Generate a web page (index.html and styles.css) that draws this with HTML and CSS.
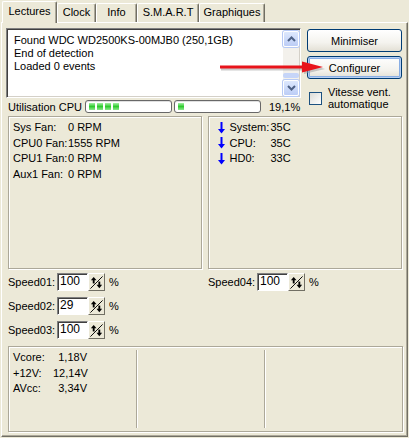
FILE: index.html
```html
<!DOCTYPE html>
<html lang="fr">
<head>
    <meta charset="UTF-8">
    <title>SpeedFan</title>
    <link rel="stylesheet" href="styles.css">
</head>
<body>

<div class="sf-window">
    <!-- Tabs -->
    <div class="sf-tabs">
        <div class="sf-tab sf-tab-active" style="width:55px">Lectures</div>
        <div class="sf-tab" style="width:39px">Clock</div>
        <div class="sf-tab" style="width:41px">Info</div>
        <div class="sf-tab" style="width:62px">S.M.A.R.T</div>
        <div class="sf-tab" style="width:66px">Graphiques</div>
    </div>

    <div class="sf-panel">
        <!-- Top: log + buttons -->
        <div class="sf-top">
            <div class="sf-left">
                <div class="sf-log">
                    <div class="sf-log-text">
                        <div>Found WDC WD2500KS-00MJB0 (250,1GB)</div>
                        <div>End of detection</div>
                        <div>Loaded 0 events</div>
                    </div>
                    <div class="sf-scroll">
                        <div class="sf-scroll-btn">
                            <svg width="9" height="6" viewBox="0 0 9 6"><path d="M1 5 L4.5 1.5 L8 5" fill="none" stroke="#4d6185" stroke-width="2"/></svg>
                        </div>
                        <div class="sf-scroll-track"><div class="sf-scroll-thumb"></div></div>
                        <div class="sf-scroll-btn">
                            <svg width="9" height="6" viewBox="0 0 9 6"><path d="M1 1 L4.5 4.5 L8 1" fill="none" stroke="#4d6185" stroke-width="2"/></svg>
                        </div>
                    </div>
                </div>

                <!-- CPU usage -->
                <div class="sf-cpu">
                    <span class="sf-cpu-label">Utilisation CPU</span>
                    <div class="sf-bar">
                        <i></i><i></i><i></i><i></i>
                    </div>
                    <div class="sf-bar sf-bar-2">
                        <i></i>
                    </div>
                    <span class="sf-cpu-value">19,1%</span>
                </div>
            </div>

            <div class="sf-right">
                <button class="sf-btn">Minimiser</button>
                <button class="sf-btn sf-btn-focus">Configurer</button>
                <label class="sf-check">
                    <span class="sf-checkbox"></span>
                    <span>Vitesse vent.<br>automatique</span>
                </label>
            </div>
        </div>

        <!-- Fans + temperatures -->
        <div class="sf-boxes">
            <div class="sf-box sf-fans">
                <span>Sys Fan:</span><span>0 RPM</span>
                <span>CPU0 Fan:</span><span>1555 RPM</span>
                <span>CPU1 Fan:</span><span>0 RPM</span>
                <span>Aux1 Fan:</span><span>0 RPM</span>
            </div>
            <div class="sf-box sf-temps">
                <span class="sf-arrow"><svg width="7" height="12" viewBox="0 0 7 12"><path d="M3.5 0 V10" stroke="#0000ff" stroke-width="2"/><path d="M0 7 L3.5 11.5 L7 7 Z" fill="#0000ff"/></svg></span><span>System:</span><span>35C</span>
                <span class="sf-arrow"><svg width="7" height="12" viewBox="0 0 7 12"><path d="M3.5 0 V10" stroke="#0000ff" stroke-width="2"/><path d="M0 7 L3.5 11.5 L7 7 Z" fill="#0000ff"/></svg></span><span>CPU:</span><span>35C</span>
                <span class="sf-arrow"><svg width="7" height="12" viewBox="0 0 7 12"><path d="M3.5 0 V10" stroke="#0000ff" stroke-width="2"/><path d="M0 7 L3.5 11.5 L7 7 Z" fill="#0000ff"/></svg></span><span>HD0:</span><span>33C</span>
            </div>
        </div>

        <!-- Fan speeds -->
        <div class="sf-speeds">
            <div class="sf-speed-col">
                <div class="sf-speed">
                    <span class="sf-speed-label">Speed01:</span>
                    <span class="sf-input">100</span>
                    <span class="sf-spin"><svg width="15" height="15" viewBox="0 0 16 16"><path d="M1.5 14.5 L14.5 1.5" stroke="#000" stroke-width="1"/><path d="M5 4 V9" stroke="#000" stroke-width="2"/><path d="M2 5.5 L5 2 L8 5.5 Z" fill="#000"/><path d="M11 7 V12" stroke="#000" stroke-width="2"/><path d="M8 10.5 L11 14 L14 10.5 Z" fill="#000"/></svg></span>
                    <span>%</span>
                </div>
                <div class="sf-speed">
                    <span class="sf-speed-label">Speed02:</span>
                    <span class="sf-input">29</span>
                    <span class="sf-spin"><svg width="15" height="15" viewBox="0 0 16 16"><path d="M1.5 14.5 L14.5 1.5" stroke="#000" stroke-width="1"/><path d="M5 4 V9" stroke="#000" stroke-width="2"/><path d="M2 5.5 L5 2 L8 5.5 Z" fill="#000"/><path d="M11 7 V12" stroke="#000" stroke-width="2"/><path d="M8 10.5 L11 14 L14 10.5 Z" fill="#000"/></svg></span>
                    <span>%</span>
                </div>
                <div class="sf-speed">
                    <span class="sf-speed-label">Speed03:</span>
                    <span class="sf-input">100</span>
                    <span class="sf-spin"><svg width="15" height="15" viewBox="0 0 16 16"><path d="M1.5 14.5 L14.5 1.5" stroke="#000" stroke-width="1"/><path d="M5 4 V9" stroke="#000" stroke-width="2"/><path d="M2 5.5 L5 2 L8 5.5 Z" fill="#000"/><path d="M11 7 V12" stroke="#000" stroke-width="2"/><path d="M8 10.5 L11 14 L14 10.5 Z" fill="#000"/></svg></span>
                    <span>%</span>
                </div>
            </div>
            <div class="sf-speed-col">
                <div class="sf-speed">
                    <span class="sf-speed-label">Speed04:</span>
                    <span class="sf-input">100</span>
                    <span class="sf-spin"><svg width="15" height="15" viewBox="0 0 16 16"><path d="M1.5 14.5 L14.5 1.5" stroke="#000" stroke-width="1"/><path d="M5 4 V9" stroke="#000" stroke-width="2"/><path d="M2 5.5 L5 2 L8 5.5 Z" fill="#000"/><path d="M11 7 V12" stroke="#000" stroke-width="2"/><path d="M8 10.5 L11 14 L14 10.5 Z" fill="#000"/></svg></span>
                    <span>%</span>
                </div>
            </div>
        </div>

        <!-- Voltages -->
        <div class="sf-box sf-volts">
            <div class="sf-volt-col">
                <span>Vcore:</span><span class="sf-v">1,18V</span>
                <span>+12V:</span><span class="sf-v">12,14V</span>
                <span>AVcc:</span><span class="sf-v">3,34V</span>
            </div>
            <div class="sf-volt-col sf-volt-sep"></div>
            <div class="sf-volt-col sf-volt-sep sf-volt-last"></div>
        </div>
    </div>

    <!-- Red annotation arrow -->
    <svg class="sf-annot" width="110" height="16" viewBox="0 0 110 16">
        <path d="M1 9 H86" stroke="#9a9a9a" stroke-width="3" opacity="0.5"/>
        <path d="M84 3 L105 9 L84 14 Z" fill="#9a9a9a" opacity="0.5"/>
        <path d="M0 7 H84" stroke="#e8141b" stroke-width="3"/>
        <path d="M82 1.5 L103 7 L82 12.5 Z" fill="#e8141b"/>
    </svg>
</div>

</body>
</html>
```

FILE: styles.css
```css
/* Reset */
* {
    margin: 0;
    padding: 0;
    box-sizing: border-box;
}

body {
    background-color: #ece9d8;
    font-family: 'Liberation Sans', Arial, sans-serif;
    font-size: 11px;
    color: #000;
    white-space: nowrap;
}

.sf-window {
    position: relative;
    width: 409px;
    height: 438px;
    background-color: #ece9d8;
}

/* Tabs */
.sf-tabs {
    display: flex;
    align-items: flex-end;
    height: 22px;
    padding-left: 2px;
}

.sf-tab {
    height: 19px;
    line-height: 17px;
    text-align: center;
    border-top: 1px solid #fff;
    border-left: 1px solid #fff;
    border-right: 1px solid #716f64;
    border-top-left-radius: 2px;
    border-top-right-radius: 2px;
    box-shadow: inset -1px 0 0 #aca899;
    overflow: hidden;
}

.sf-tab-active {
    height: 22px;
    line-height: 19px;
    margin-bottom: -1px;
    background-color: #ece9d8;
    position: relative;
    z-index: 2;
}

/* Main panel */
.sf-panel {
    margin: 0 1px 0 1px;
    height: 415px;
    border-top: 1px solid #fff;
    border-left: 1px solid #fff;
    border-right: 1px solid #716f64;
    border-bottom: 1px solid #716f64;
    box-shadow: inset -1px -1px 0 #aca899;
    padding: 5px 5px 0 5px;
}

.sf-top {
    display: flex;
    gap: 6px;
}

.sf-left {
    width: 296px;
    margin-left: -1px;
}

/* Log box */
.sf-log {
    display: flex;
    height: 70px;
    background-color: #fff;
    border-top: 1px solid #808080;
    border-left: 1px solid #808080;
    border-right: 1px solid #fff;
    border-bottom: 1px solid #fff;
    box-shadow: inset 1px 1px 0 #404040, inset -1px -1px 0 #d4d0c8;
    padding: 2px 1px 1px 2px;
}

.sf-log-text {
    flex: 1;
    padding: 3px 0 0 5px;
    line-height: 13px;
}

.sf-scroll {
    width: 16px;
    display: flex;
    flex-direction: column;
    background-color: #f3f1ec;
}

.sf-scroll-btn {
    height: 16px;
    display: flex;
    align-items: center;
    justify-content: center;
    background: linear-gradient(#dde8fd, #bccdf6);
    border: 1px solid #fff;
    border-radius: 2px;
    box-shadow: 0 0 0 1px #b7caf5;
}

.sf-scroll-track {
    flex: 1;
    display: flex;
    align-items: flex-end;
    padding-bottom: 2px;
}

.sf-scroll-thumb {
    width: 100%;
    height: 5px;
    background-color: #c6d5f8;
    border-radius: 2px;
}

/* CPU usage row */
.sf-cpu {
    display: flex;
    align-items: center;
    height: 15px;
    margin-top: 1px;
    padding-left: 2px;
}

.sf-cpu-label {
    width: 77px;
}

.sf-bar {
    width: 87px;
    height: 13px;
    border: 1px solid #686868;
    border-radius: 3px;
    background-color: #fff;
    box-shadow: inset 0 1px 0 #e0e0e0;
    display: flex;
    align-items: center;
    gap: 2px;
    padding-left: 3px;
}

.sf-bar-2 {
    margin-left: 2px;
}

.sf-bar i {
    width: 6px;
    height: 7px;
    background: linear-gradient(#a6f0a6, #2fcb2f 50%, #8ee88e);
}

.sf-cpu-value {
    margin-left: 8px;
}

/* Right column */
.sf-right {
    width: 95px;
    display: flex;
    flex-direction: column;
    padding-top: 1px;
}

.sf-btn {
    height: 23px;
    width: 95px;
    font-family: inherit;
    font-size: 11px;
    color: #000;
    border: 1px solid #003c74;
    border-radius: 3px;
    background: linear-gradient(#ffffff, #f4f3ee 60%, #e3e0d5);
    margin-bottom: 4px;
}

.sf-btn-focus {
    box-shadow: inset 0 0 0 1px #b6cff3, inset 0 0 0 2px #89aee4;
}

.sf-check {
    display: flex;
    gap: 6px;
    padding-left: 2px;
    margin-top: 3px;
    line-height: 12px;
}

.sf-checkbox {
    width: 13px;
    height: 13px;
    margin-top: 6px;
    border: 1px solid #1c5180;
    background: linear-gradient(135deg, #dcdcd7, #fff);
}

/* Fans and temperature boxes */
.sf-boxes {
    display: flex;
    gap: 6px;
    margin-top: 2px;
    padding-left: 1px;
}

.sf-box {
    height: 153px;
    border: 1px solid #aca899;
    box-shadow: inset 1px 1px 0 #fff, 1px 1px 0 #fff;
    padding: 3px 0 0 4px;
    line-height: 15.6px;
}

.sf-fans {
    width: 194px;
    display: grid;
    grid-template-columns: 55px auto;
    align-content: start;
}

.sf-temps {
    width: 195px;
    display: grid;
    grid-template-columns: 12px 41px auto;
    align-content: start;
    padding-left: 9px;
}

.sf-arrow {
    display: flex;
    align-items: center;
}

/* Speed inputs */
.sf-speeds {
    display: flex;
    margin-top: 4px;
    padding-left: 1px;
}

.sf-speed-col {
    width: 200px;
    flex-shrink: 0;
}

.sf-speed {
    display: flex;
    align-items: center;
    height: 18px;
    margin-bottom: 6px;
}

.sf-speed-label {
    width: 49px;
}

.sf-input {
    width: 31px;
    height: 18px;
    line-height: 15px;
    padding-left: 2px;
    background-color: #fff;
    border-top: 1px solid #808080;
    border-left: 1px solid #808080;
    border-right: 1px solid #fff;
    border-bottom: 1px solid #fff;
    box-shadow: inset 1px 1px 0 #404040;
    font-size: 12px;
}

.sf-spin {
    width: 17px;
    height: 18px;
    display: flex;
    align-items: center;
    justify-content: center;
    border-top: 1px solid #fff;
    border-left: 1px solid #fff;
    border-right: 1px solid #716f64;
    border-bottom: 1px solid #716f64;
    margin-right: 4px;
}

/* Voltages */
.sf-volts {
    width: 395px;
    height: 86px;
    margin-left: 1px;
    margin-top: 1px;
    display: flex;
    padding: 0;
}

.sf-volt-col {
    width: 127px;
    display: grid;
    grid-template-columns: 40px 34px;
    align-content: start;
    padding: 3px 0 0 4px;
}

.sf-v {
    text-align: right;
}

.sf-volt-sep {
    margin: 3px 0 3px 0;
    border-left: 1px solid #aca899;
    box-shadow: inset 1px 0 0 #fff;
    width: 128px;
}

.sf-volt-last {
    flex: 1;
}

/* Red arrow overlay */
.sf-annot {
    position: absolute;
    left: 220px;
    top: 60px;
}
```
